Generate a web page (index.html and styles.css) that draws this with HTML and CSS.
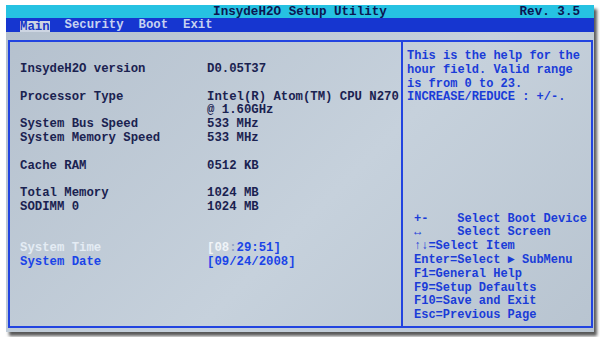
FILE: index.html
```html
<!DOCTYPE html>
<html lang="en">
<head>
  <meta charset="UTF-8" />
  <title>InsydeH2O Setup Utility</title>
  <link rel="stylesheet" href="styles.css">
</head>
<body>
  <div class="screen">
    <div class="titlebar">
      <span class="title">InsydeH2O Setup Utility</span>
      <span class="rev">Rev. 3.5</span>
    </div>
    <div class="menubar">
      <span class="tab active">Main</span>
      <span class="tab">Security</span>
      <span class="tab">Boot</span>
      <span class="tab">Exit</span>
    </div>
    <div class="body">
      <div class="frame">
        <div class="main-pane">
          <div class="group">
            <div class="row"><span class="label">InsydeH2O version</span><span>D0.05T37</span></div>
          </div>
          <div class="group">
            <div class="row"><span class="label">Processor Type</span><span>Intel(R) Atom(TM) CPU N270<br>@ 1.60GHz</span></div>
            <div class="row"><span class="label">System Bus Speed</span><span>533 MHz</span></div>
            <div class="row"><span class="label">System Memory Speed</span><span>533 MHz</span></div>
          </div>
          <div class="group">
            <div class="row"><span class="label">Cache RAM</span><span>0512 KB</span></div>
          </div>
          <div class="group">
            <div class="row"><span class="label">Total Memory</span><span>1024 MB</span></div>
            <div class="row"><span class="label">SODIMM 0</span><span>1024 MB</span></div>
          </div>
          <div class="group settings">
            <div class="row selected"><span class="label">System Time</span><span class="field"><span class="hi">[08</span><span class="dim">:</span>29:51]</span></div>
            <div class="row editable"><span class="label">System Date</span><span class="field">[09/24/2008]</span></div>
          </div>
        </div>
        <div class="help-pane">
          <p class="help">This is the help for the<br>hour field. Valid range<br>is from 0 to 23.<br>INCREASE/REDUCE : +/-.</p>
          <div class="keys">
            <div class="key">+-    Select Boot Device</div>
            <div class="key">↔     Select Screen</div>
            <div class="key">↑↓=Select Item</div>
            <div class="key">Enter=Select ► SubMenu</div>
            <div class="key">F1=General Help</div>
            <div class="key">F9=Setup Defaults</div>
            <div class="key">F10=Save and Exit</div>
            <div class="key">Esc=Previous Page</div>
          </div>
        </div>
      </div>
    </div>
  </div>
</body>
</html>
```
FILE: styles.css
```css
body { margin: 0; padding: 5px 6px; background: #fff; font-family: "Liberation Mono", "DejaVu Sans Mono", monospace; font-weight: bold; font-size: 12.3px; }
.screen { width: 588px; height: 327px; display: flex; flex-direction: column; background: #b9c5d1; box-shadow: 3px 4px 3px rgba(0,0,0,0.65); }
.titlebar { height: 12px; background: #26c2e2; color: #0c1650; display: flex; align-items: center; justify-content: center; position: relative; line-height: 12px; padding-top: 1px; font-size: 12.6px; }
.titlebar .rev { position: absolute; right: 14px; top: 1px; }
.menubar { height: 13px; background: #1636d0; color: #c6d2f0; display: flex; align-items: center; gap: 15px; padding: 1px 0 0 14px; line-height: 13px; }
.tab.active { background: #cdd5e2; color: #1838c8; height: 12px; line-height: 12px; margin-top: 2px; }
.body { flex: 1; min-height: 0; padding: 8px 1px 4px 2px; background: linear-gradient(135deg, #b5c1ce 0%, #c6d1dc 55%, #b8c4d0 100%); }
.frame { height: 100%; box-sizing: border-box; border: 2px solid #2244e0; display: flex; }
.main-pane { width: 381px; border-right: 2px solid #2244e0; padding: 21px 0 0 10px; color: #1a2250; line-height: 13.8px; }
.group + .group { margin-top: 13.8px; }
.group.settings { margin-top: 27.6px; }
.row { display: flex; }
.label { width: 187px; flex-shrink: 0; }
.row.selected { color: #e4ecf4; }
.row.selected .field { color: #1a44e8; }
.row.selected .hi { color: #f0f4f8; }
.row.selected .dim { color: #8fa0c4; }
.row.editable { color: #1a44e8; }
.help-pane { flex: 1; display: flex; flex-direction: column; padding: 8px 0 3px 4px; color: #1a3cd8; line-height: 13.8px; }
.help { margin: 0; font-size: 12px; }
.keys { margin-top: auto; padding-left: 7px; font-size: 12px; }
.key { white-space: pre; }
```
